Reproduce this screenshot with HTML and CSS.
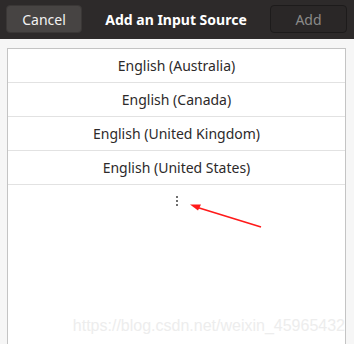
FILE: index.html
```html
<!DOCTYPE html>
<html>
<head>
<meta charset="utf-8">
<link rel="stylesheet" href="styles.css">
</head>
<body>
<div class="window">
  <header class="headerbar">
    <button class="btn cancel">Cancel</button>
    <div class="title">Add an Input Source</div>
    <button class="btn add">Add</button>
  </header>
  <main class="content">
    <div class="list">
      <div class="row">English (Australia)</div>
      <div class="row">English (Canada)</div>
      <div class="row">English (United Kingdom)</div>
      <div class="row">English (United States)</div>
      <div class="row more">
        <svg width="4" height="12" viewBox="0 0 4 12"><rect x="1" y="0" width="2" height="2" fill="#6f6f6f"/><rect x="1" y="4" width="2" height="2" fill="#6f6f6f"/><rect x="1" y="8" width="2" height="2" fill="#6f6f6f"/></svg>
      </div>
      <div class="watermark">https://blog.csdn.net/weixin_45965432</div>
    </div>
    <svg class="arrow" width="354" height="344" viewBox="0 0 354 344">
      <line x1="261" y1="227" x2="196" y2="207" stroke="#ff1a1a" stroke-width="1.6"/>
      <polygon points="190,204.5 201,204.5 198,210.5" fill="#ff1a1a"/>
    </svg>
  </main>
</div>
</body>
</html>
```
FILE: styles.css
```css
* { box-sizing: border-box; }
html, body { margin: 0; padding: 0; }
body {
  width: 354px;
  height: 344px;
  overflow: hidden;
  font-family: "Noto Sans", "Open Sans", sans-serif;
  background: #f6f6f6;
}
.window { display: flex; flex-direction: column; height: 344px; position: relative; }
.headerbar {
  height: 39px;
  background: #2d2a2a;
  display: flex;
  align-items: center;
  justify-content: space-between;
  padding: 0 7px 1px 6px;
}
.btn {
  font-family: inherit;
  font-size: 14px;
  height: 28px;
  border-radius: 4px;
  padding: 0;
  display: flex;
  align-items: center;
  justify-content: center;
}
.cancel {
  width: 76px;
  background: #474443;
  color: #f2f2f2;
  border: 1px solid #3a3736;
}
.add {
  width: 77px;
  background: #2a2727;
  color: #8b8a89;
  border: 1px solid #1d1b1b;
}
.title {
  color: #ffffff;
  font-weight: bold;
  font-size: 14px;
}
.content {
  flex: 1;
  padding: 9px 8px 0 7px;
}
.list {
  height: 100%;
  background: #ffffff;
  border: 1px solid #c4c4c4;
  border-bottom: none;
  position: relative;
}
.row {
  height: 34px;
  border-bottom: 1px solid #e2e2e2;
  display: flex;
  align-items: center;
  justify-content: center;
  font-size: 14px;
  color: #2d2a2a;
}
.row.more {
  border-bottom: none;
  height: 36px;
  align-items: flex-start;
  padding-top: 11px;
}
.watermark {
  position: absolute;
  right: 0;
  bottom: 9px;
  font-family: "Liberation Sans", Arial, sans-serif;
  font-size: 16px;
  color: #ededed;
}
.arrow { position: absolute; left: 0; top: 0; pointer-events: none; }
```
